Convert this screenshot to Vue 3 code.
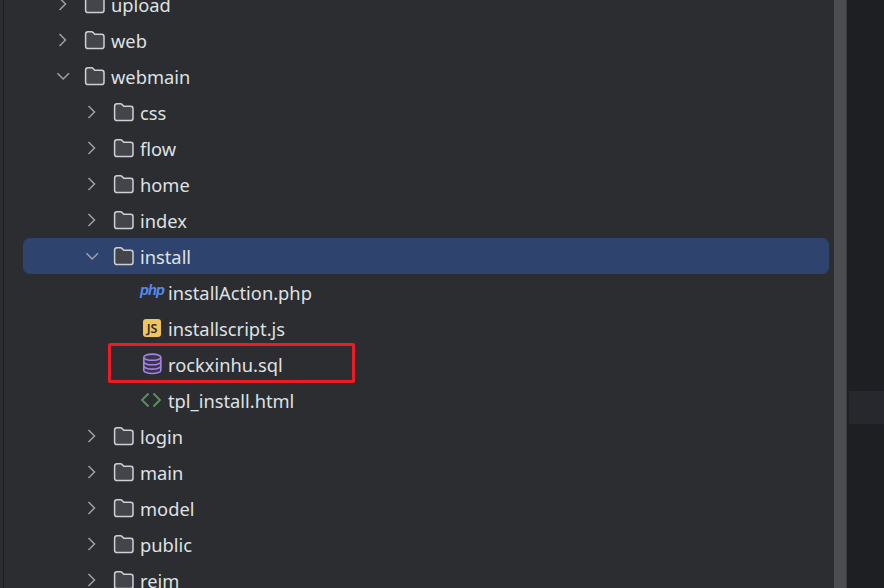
<script setup>
const rows = [
  { name: 'upload', depth: 0, icon: 'folder' },
  { name: 'web', depth: 0, icon: 'folder' },
  { name: 'webmain', depth: 0, icon: 'folder', open: true },
  { name: 'css', depth: 1, icon: 'folder' },
  { name: 'flow', depth: 1, icon: 'folder' },
  { name: 'home', depth: 1, icon: 'folder' },
  { name: 'index', depth: 1, icon: 'folder' },
  { name: 'install', depth: 1, icon: 'folder', open: true, selected: true },
  { name: 'installAction.php', depth: 2, icon: 'php' },
  { name: 'installscript.js', depth: 2, icon: 'js' },
  { name: 'rockxinhu.sql', depth: 2, icon: 'sql', marked: true },
  { name: 'tpl_install.html', depth: 2, icon: 'html' },
  { name: 'login', depth: 1, icon: 'folder' },
  { name: 'main', depth: 1, icon: 'folder' },
  { name: 'model', depth: 1, icon: 'folder' },
  { name: 'public', depth: 1, icon: 'folder' },
  { name: 'reim', depth: 1, icon: 'folder' }
]
</script>

<template>
  <div class="ide">
    <div class="tree-panel">
      <div class="tree">
        <div
          v-for="row in rows"
          :key="row.name"
          class="row"
          :class="[`depth-${row.depth}`, { selected: row.selected, marked: row.marked }]"
        >
          <span class="arrow">
            <svg v-if="row.icon === 'folder'" width="16" height="16" viewBox="0 0 16 16" fill="none">
              <path v-if="row.open" d="M2.5 5.2 8.2 11 14 5.2" class="chevron" />
              <path v-else d="M4.5 2 10.5 8 4.5 14" class="chevron" />
            </svg>
          </span>

          <svg v-if="row.icon === 'folder'" class="icon folder" width="22" height="20" viewBox="0 0 22 20" fill="none">
            <path
              d="M1.6 4.2a2.4 2.4 0 0 1 2.4-2.4h3.4c.7 0 1.3.3 1.8.8l1.5 1.7h6.9a2.4 2.4 0 0 1 2.4 2.4v9.5a2.4 2.4 0 0 1-2.4 2.4H4a2.4 2.4 0 0 1-2.4-2.4z"
              fill="#43454a"
              stroke="#ced0d6"
              stroke-width="1.5"
            />
          </svg>

          <span v-else-if="row.icon === 'php'" class="icon php">php</span>

          <span v-else-if="row.icon === 'js'" class="icon js-wrap"><span class="js">JS</span></span>

          <svg v-else-if="row.icon === 'sql'" class="icon" width="22" height="22" viewBox="0 0 22 22" fill="none" stroke="#a582e6" stroke-width="1.6">
            <path d="M3.8 4.2v13.2c0 1.7 3.8 3.1 8.5 3.1s8.5-1.4 8.5-3.1V4.2" fill="#3a3548" />
            <ellipse cx="12.3" cy="4.2" rx="8.5" ry="3.1" fill="#3a3548" />
            <path d="M3.8 8.7c0 1.7 3.8 3.1 8.5 3.1s8.5-1.4 8.5-3.1M3.8 13c0 1.7 3.8 3.1 8.5 3.1s8.5-1.4 8.5-3.1" />
          </svg>

          <svg v-else class="icon" width="22" height="16" viewBox="0 0 22 16" fill="none" stroke="#57965c" stroke-width="1.8">
            <path d="M8.5 1.5 2 8l6.5 6.5M13.5 1.5 20 8l-6.5 6.5" />
          </svg>

          <span class="name">{{ row.name }}</span>
          <span v-if="row.marked" class="mark"></span>
        </div>
      </div>
    </div>

    <div class="scrollbar"></div>

    <div class="editor">
      <div class="current-line"></div>
    </div>
  </div>
</template>

<style scoped>
.ide {
  display: flex;
  width: 884px;
  height: 588px;
  overflow: hidden;
  background: #2b2d30;
  font-family: "Noto Sans", "Open Sans", sans-serif;
}
.tree-panel {
  flex: 0 0 834px;
  height: 588px;
  overflow: hidden;
  box-sizing: border-box;
  padding: 0 5px 0 23px;
  background: linear-gradient(90deg, #2b2d30 0, #2b2d30 3px, #1e1f22 3px, #1e1f22 4px, #2b2d30 4px);
}
.tree {
  margin-top: -14px;
}
.row {
  position: relative;
  display: flex;
  align-items: center;
  height: 36px;
  border-radius: 7px;
  color: #dfe1e5;
  font-size: 18.3px;
}
.row.selected {
  background: #2e436e;
}
.depth-0 { padding-left: 32px; }
.depth-1 { padding-left: 61px; }
.depth-2 { padding-left: 117px; }
.arrow {
  flex: 0 0 16px;
  width: 16px;
  height: 16px;
  margin-right: 13px;
}
.depth-2 .arrow {
  display: none;
}
.arrow svg {
  display: block;
}
.chevron {
  stroke: #9da0a8;
  stroke-width: 1.5;
}
.icon {
  flex: 0 0 22px;
  width: 22px;
  margin-right: 6px;
}
.folder {
  margin-right: 5px;
}
.php {
  color: #548af7;
  font-family: "Liberation Sans", sans-serif;
  font-size: 14.5px;
  font-weight: 700;
  font-style: italic;
  letter-spacing: -0.8px;
  line-height: 20px;
  margin-top: -5px;
}
.js-wrap {
  display: block;
}
.js {
  display: block;
  width: 18px;
  height: 18px;
  margin-left: 3px;
  border-radius: 3px;
  background: #f2c55c;
  color: #2b2d30;
  font-family: "Noto Sans", sans-serif;
  font-size: 12.5px;
  font-weight: 600;
  line-height: 20px;
  text-align: center;
}
.name {
  margin-top: 2px;
  white-space: nowrap;
  line-height: 34px;
}
.mark {
  position: absolute;
  left: 85px;
  top: -3px;
  box-sizing: border-box;
  width: 247px;
  height: 40px;
  border: 3px solid #ed1c24;
  border-radius: 2px;
}
.scrollbar {
  flex: 0 0 12px;
  height: 588px;
  background: #4c4d50;
}
.editor {
  flex: 1;
  position: relative;
  height: 588px;
  background: #1e1f22;
  border-left: 1px solid #393b40;
}
.current-line {
  position: absolute;
  left: 2px;
  right: 0;
  top: 391px;
  height: 33px;
  background: #26282e;
}
</style>
